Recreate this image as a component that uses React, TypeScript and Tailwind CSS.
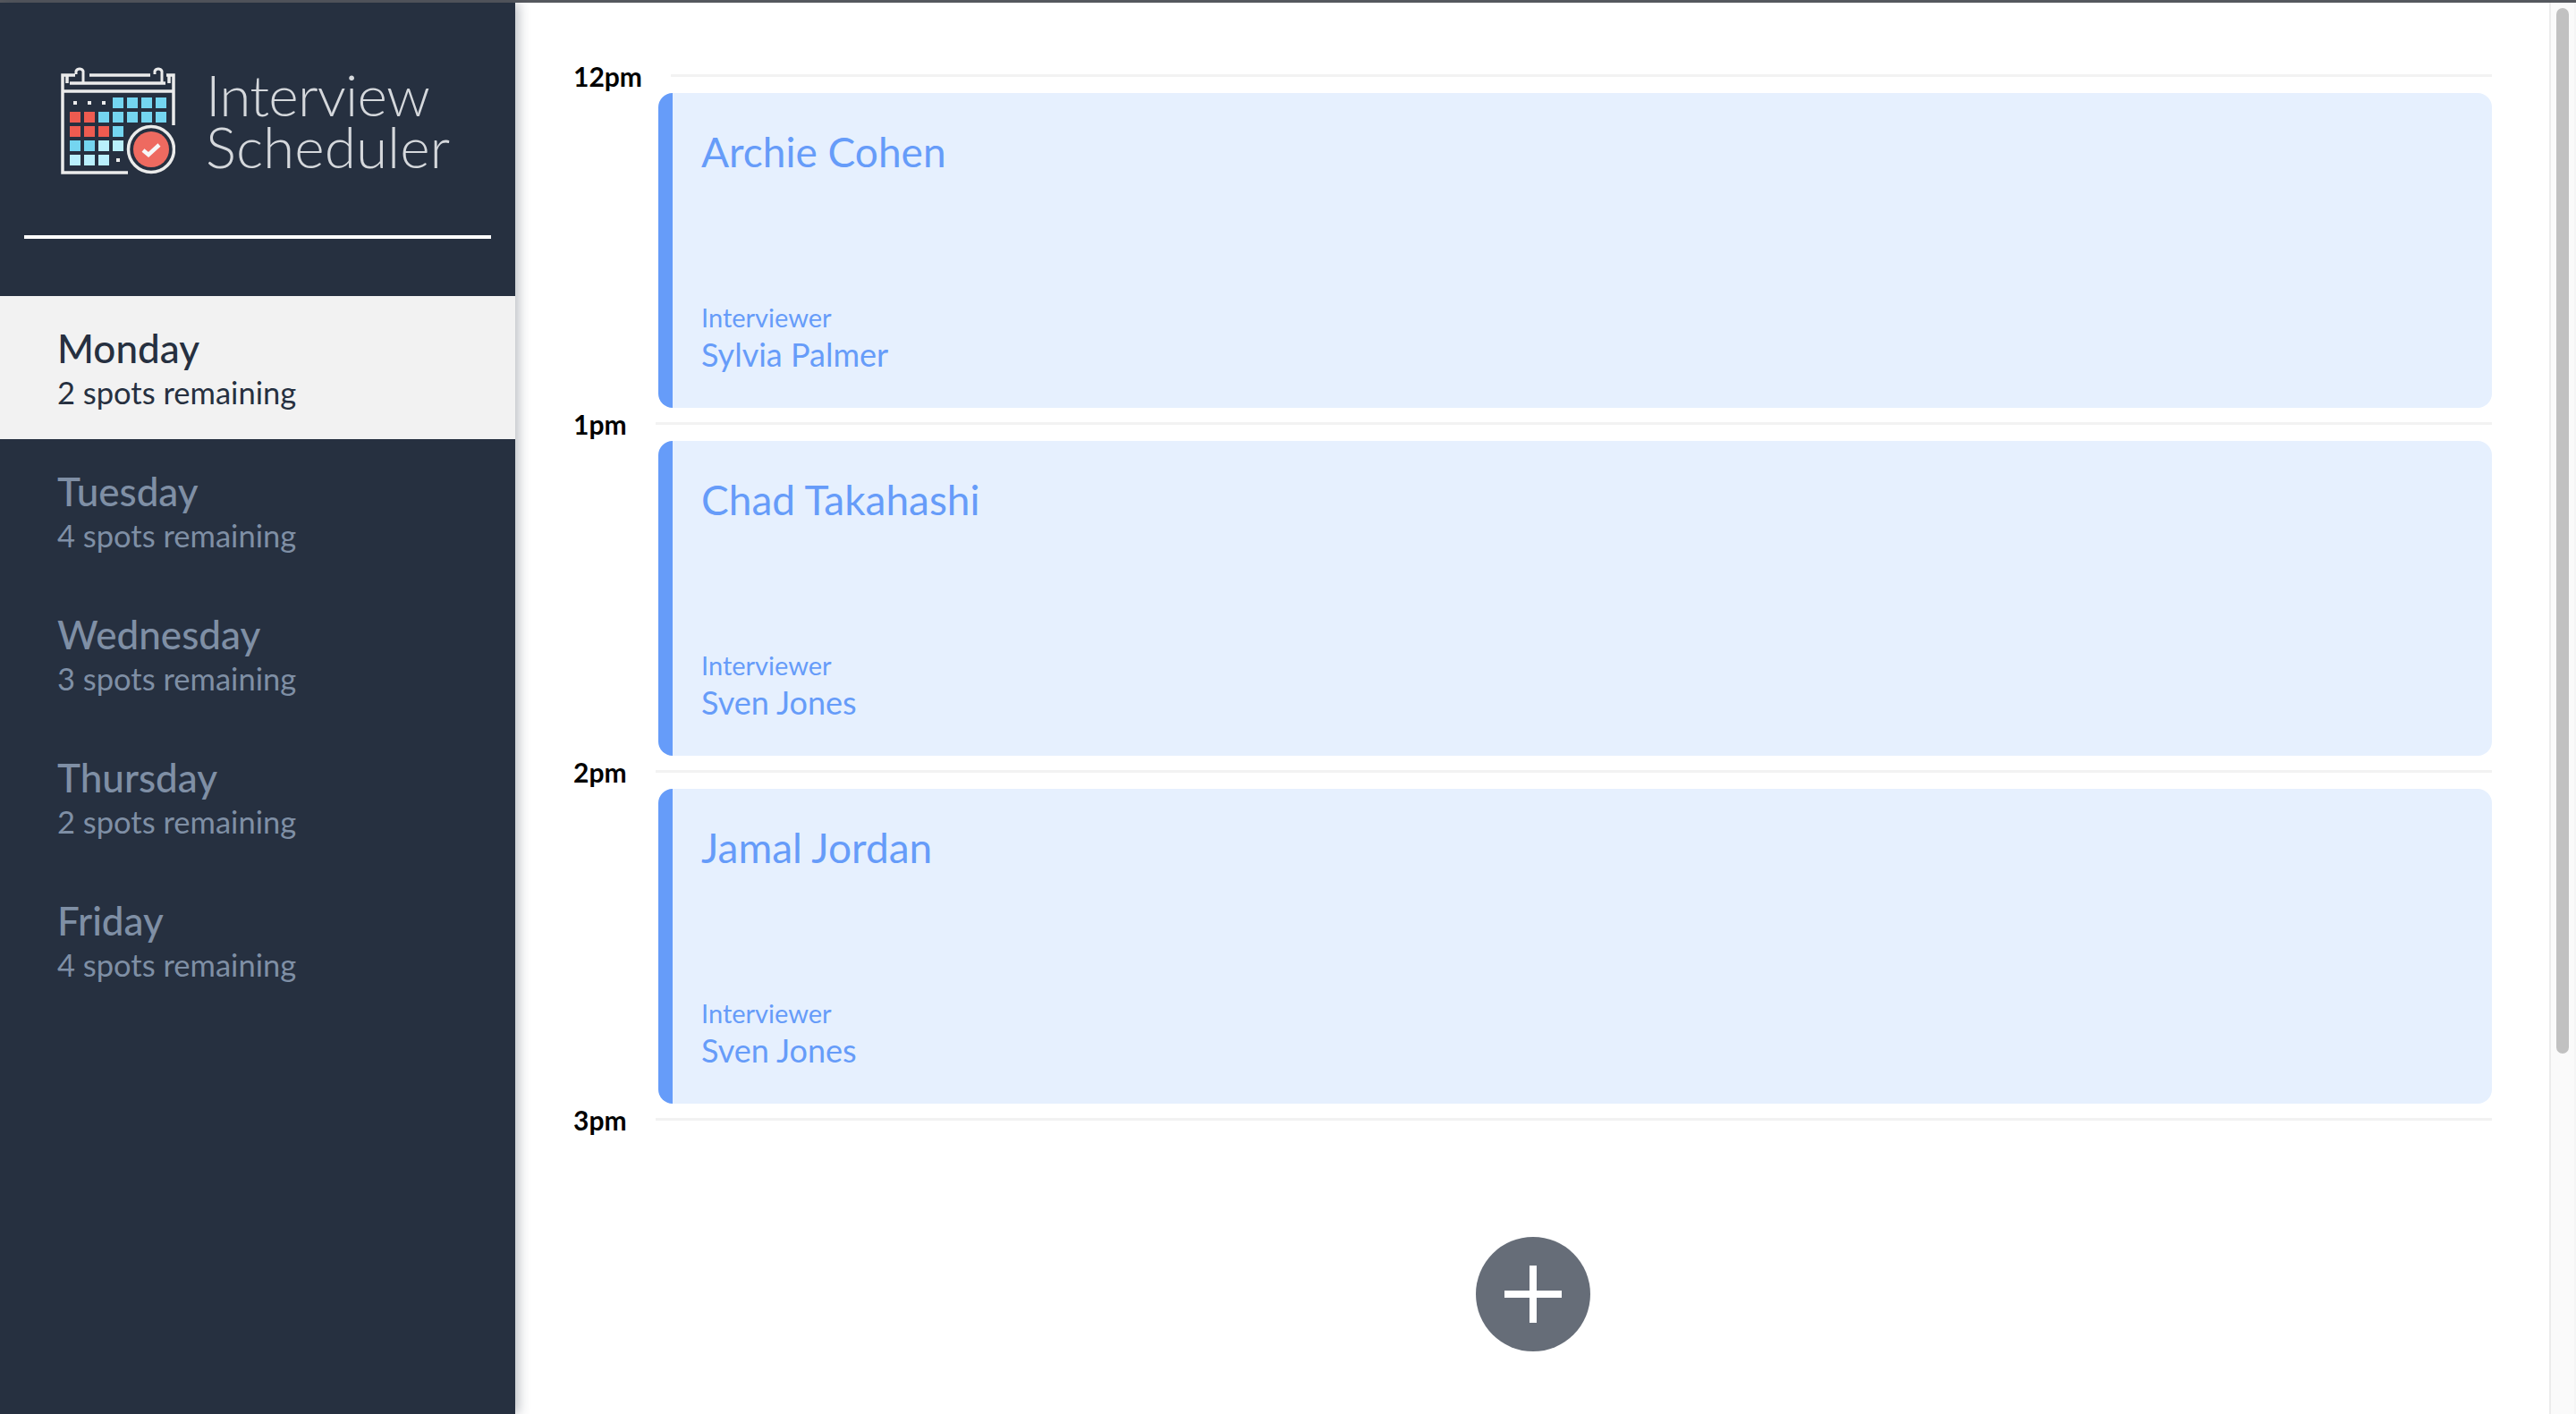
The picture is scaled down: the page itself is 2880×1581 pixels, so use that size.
const DAYS = [
  { name: 'Monday', spots: 2 },
  { name: 'Tuesday', spots: 4 },
  { name: 'Wednesday', spots: 3 },
  { name: 'Thursday', spots: 2 },
  { name: 'Friday', spots: 4 },
]

const APPOINTMENTS = [
  { time: '12pm', student: 'Archie Cohen', interviewer: 'Sylvia Palmer' },
  { time: '1pm', student: 'Chad Takahashi', interviewer: 'Sven Jones' },
  { time: '2pm', student: 'Jamal Jordan', interviewer: 'Sven Jones' },
]

const B = '#74d5f0'
const L = '#b9effc'
const R = '#ee5b50'

// calendar cells, one row per week, null leaves a gap
const WEEKS: { y: number; cells: (string | null)[] }[] = [
  { y: 34, cells: [null, null, null, B, B, B, B] },
  { y: 50, cells: [R, R, B, B, B, B, B] },
  { y: 66, cells: [R, R, R, B] },
  { y: 82, cells: [B, B, L, L] },
  { y: 98, cells: [L, L, L] },
]

function Logo() {
  return (
    <svg width="128" height="120" viewBox="0 0 128 120" className="shrink-0">
      <g fill="none" stroke="#ebebeb" strokeWidth="3.5">
        <path d="M75 118H2V9h14M32 9h68M118 9h8v56" />
        <path d="M10 18h107M2 27h124" />
        <path d="M7 9v9M121 9v9" />
        <path d="M17 8V4.500a4.500 4.500 0 0 1 8 0V17M105 8V4.500a4.500 4.500 0 0 1 8 0V17" strokeWidth="3" />
        <circle cx="101" cy="92" r="25.500" strokeWidth="3.500" />
      </g>
      {WEEKS.map((w) =>
        w.cells.map((c, i) =>
          c ? <rect key={`${w.y}-${i}`} x={10 + i * 16} y={w.y} width="12" height="12" fill={c} /> : null,
        ),
      )}
      <g fill="#ebebeb">
        <rect x="14" y="38" width="4" height="4" />
        <rect x="30" y="38" width="4" height="4" />
        <rect x="46" y="38" width="4" height="4" />
        <rect x="62" y="102" width="4" height="4" />
      </g>
      <circle cx="101" cy="92" r="20" fill="#ee6a60" />
      <path d="M92 93l6 5 12-11" fill="none" stroke="#f7f7f7" strokeWidth="4.500" />
    </svg>
  )
}

function DayItem({ name, spots, selected }: { name: string; spots: number; selected: boolean }) {
  return (
    <li className={`h-[160px] pl-[64px] pt-[30px] ${selected ? 'bg-[#f2f2f2] text-[#263040]' : 'text-[#7f8fa5]'}`}>
      <h2 className="text-[44px] leading-[56px] font-medium">{name}</h2>
      <p className="pt-[2px] text-[34.500px] leading-[40px]">{spots} spots remaining</p>
    </li>
  )
}

function TimeLine({ time }: { time: string }) {
  return (
    <header className="flex h-[37px] items-start">
      <span className="-mt-[2px] text-[30px] leading-[40px] font-bold text-black">{time}</span>
      <hr className="mt-[16px] ml-[32px] h-[3px] flex-1 border-0 bg-[#f2f2f2]" />
    </header>
  )
}

function Appointment({ time, student, interviewer }: { time: string; student: string; interviewer: string }) {
  return (
    <article className="h-[389px]">
      <TimeLine time={time} />
      <div className="ml-[95px] flex h-[352px] flex-col justify-between rounded-[16px] border-l-[16px] border-[#669cf9] bg-[#e6f0fe] pt-[34px] pb-[38px] pl-[32px] text-[#669cf9]">
        <h2 className="text-[46px] leading-[64px]">{student}</h2>
        <div>
          <h4 className="text-[29px] leading-[38px]">Interviewer</h4>
          <h3 className="text-[36px] leading-[44px]">{interviewer}</h3>
        </div>
      </div>
    </article>
  )
}

export default function App() {
  return (
    <div className="flex h-screen flex-col overflow-hidden bg-white font-['Lato','Liberation_Sans',sans-serif]">
      <div className="h-[3px] shrink-0 bg-[#55585e]" />
      <div className="flex min-h-0 flex-1">
        <nav className="z-10 w-[576px] shrink-0 bg-[#263040] shadow-[4px_0_12px_rgba(38,48,64,0.3)]">
          <div className="mx-[27px] flex h-[264px] items-start border-b-4 border-white pt-[72px] pl-[41px]">
            <Logo />
            <h1 className="mt-[2px] ml-[34px] text-[64px] leading-[58px] font-light text-[#d5d8dc]">
              <span className="tracking-[-0.8px]">Interview</span>
              <br />
              Scheduler
            </h1>
          </div>
          <ul className="mt-[64px]">
            {DAYS.map((d, i) => (
              <DayItem key={d.name} name={d.name} spots={d.spots} selected={i === 0} />
            ))}
          </ul>
        </nav>
        <main className="flex-1 pt-[64px] pr-[64px] pl-[65px]">
          {APPOINTMENTS.map((a) => (
            <Appointment key={a.time} time={a.time} student={a.student} interviewer={a.interviewer} />
          ))}
          <TimeLine time="3pm" />
          <div className="mt-[112px] flex justify-center">
            <button className="grid size-[128px] place-items-center rounded-full bg-[#666d78]">
              <svg width="64" height="64" viewBox="0 0 64 64">
                <path d="M32 0v64M0 32h64" stroke="#fff" strokeWidth="8" fill="none" />
              </svg>
            </button>
          </div>
        </main>
        <div className="w-[30px] shrink-0 border-x-2 border-l-[#ececec] border-r-[#f5f5f5] bg-[#fafafa] px-[6px] pt-[6px]">
          <div className="h-[1169px] rounded-full bg-[#c1c1c1]" />
        </div>
      </div>
    </div>
  )
}
